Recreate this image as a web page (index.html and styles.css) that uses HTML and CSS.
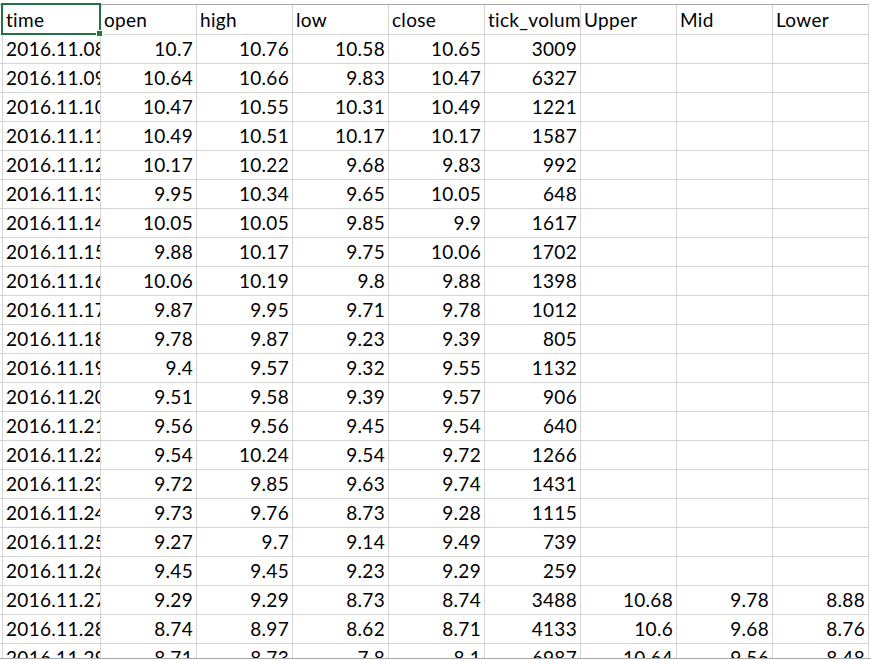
FILE: index.html
```html
<!DOCTYPE html>
<html>
<head>
<meta charset="utf-8">
<title>Sheet</title>
<link rel="stylesheet" href="styles.css">
</head>
<body>
<div class="viewport">
  <div class="grid">
    <div class="e"></div><div class="c">time</div><div class="c">open</div><div class="c">high</div><div class="c">low</div><div class="c">close</div><div class="c">tick_volume</div><div class="c">Upper</div><div class="c">Mid</div><div class="c">Lower</div>
    <div class="e"></div><div class="c">2016.11.08</div><div class="c n">10.7</div><div class="c n">10.76</div><div class="c n">10.58</div><div class="c n">10.65</div><div class="c n">3009</div><div class="c"></div><div class="c"></div><div class="c"></div>
    <div class="e"></div><div class="c">2016.11.09</div><div class="c n">10.64</div><div class="c n">10.66</div><div class="c n">9.83</div><div class="c n">10.47</div><div class="c n">6327</div><div class="c"></div><div class="c"></div><div class="c"></div>
    <div class="e"></div><div class="c">2016.11.10</div><div class="c n">10.47</div><div class="c n">10.55</div><div class="c n">10.31</div><div class="c n">10.49</div><div class="c n">1221</div><div class="c"></div><div class="c"></div><div class="c"></div>
    <div class="e"></div><div class="c">2016.11.11</div><div class="c n">10.49</div><div class="c n">10.51</div><div class="c n">10.17</div><div class="c n">10.17</div><div class="c n">1587</div><div class="c"></div><div class="c"></div><div class="c"></div>
    <div class="e"></div><div class="c">2016.11.12</div><div class="c n">10.17</div><div class="c n">10.22</div><div class="c n">9.68</div><div class="c n">9.83</div><div class="c n">992</div><div class="c"></div><div class="c"></div><div class="c"></div>
    <div class="e"></div><div class="c">2016.11.13</div><div class="c n">9.95</div><div class="c n">10.34</div><div class="c n">9.65</div><div class="c n">10.05</div><div class="c n">648</div><div class="c"></div><div class="c"></div><div class="c"></div>
    <div class="e"></div><div class="c">2016.11.14</div><div class="c n">10.05</div><div class="c n">10.05</div><div class="c n">9.85</div><div class="c n">9.9</div><div class="c n">1617</div><div class="c"></div><div class="c"></div><div class="c"></div>
    <div class="e"></div><div class="c">2016.11.15</div><div class="c n">9.88</div><div class="c n">10.17</div><div class="c n">9.75</div><div class="c n">10.06</div><div class="c n">1702</div><div class="c"></div><div class="c"></div><div class="c"></div>
    <div class="e"></div><div class="c">2016.11.16</div><div class="c n">10.06</div><div class="c n">10.19</div><div class="c n">9.8</div><div class="c n">9.88</div><div class="c n">1398</div><div class="c"></div><div class="c"></div><div class="c"></div>
    <div class="e"></div><div class="c">2016.11.17</div><div class="c n">9.87</div><div class="c n">9.95</div><div class="c n">9.71</div><div class="c n">9.78</div><div class="c n">1012</div><div class="c"></div><div class="c"></div><div class="c"></div>
    <div class="e"></div><div class="c">2016.11.18</div><div class="c n">9.78</div><div class="c n">9.87</div><div class="c n">9.23</div><div class="c n">9.39</div><div class="c n">805</div><div class="c"></div><div class="c"></div><div class="c"></div>
    <div class="e"></div><div class="c">2016.11.19</div><div class="c n">9.4</div><div class="c n">9.57</div><div class="c n">9.32</div><div class="c n">9.55</div><div class="c n">1132</div><div class="c"></div><div class="c"></div><div class="c"></div>
    <div class="e"></div><div class="c">2016.11.20</div><div class="c n">9.51</div><div class="c n">9.58</div><div class="c n">9.39</div><div class="c n">9.57</div><div class="c n">906</div><div class="c"></div><div class="c"></div><div class="c"></div>
    <div class="e"></div><div class="c">2016.11.21</div><div class="c n">9.56</div><div class="c n">9.56</div><div class="c n">9.45</div><div class="c n">9.54</div><div class="c n">640</div><div class="c"></div><div class="c"></div><div class="c"></div>
    <div class="e"></div><div class="c">2016.11.22</div><div class="c n">9.54</div><div class="c n">10.24</div><div class="c n">9.54</div><div class="c n">9.72</div><div class="c n">1266</div><div class="c"></div><div class="c"></div><div class="c"></div>
    <div class="e"></div><div class="c">2016.11.23</div><div class="c n">9.72</div><div class="c n">9.85</div><div class="c n">9.63</div><div class="c n">9.74</div><div class="c n">1431</div><div class="c"></div><div class="c"></div><div class="c"></div>
    <div class="e"></div><div class="c">2016.11.24</div><div class="c n">9.73</div><div class="c n">9.76</div><div class="c n">8.73</div><div class="c n">9.28</div><div class="c n">1115</div><div class="c"></div><div class="c"></div><div class="c"></div>
    <div class="e"></div><div class="c">2016.11.25</div><div class="c n">9.27</div><div class="c n">9.7</div><div class="c n">9.14</div><div class="c n">9.49</div><div class="c n">739</div><div class="c"></div><div class="c"></div><div class="c"></div>
    <div class="e"></div><div class="c">2016.11.26</div><div class="c n">9.45</div><div class="c n">9.45</div><div class="c n">9.23</div><div class="c n">9.29</div><div class="c n">259</div><div class="c"></div><div class="c"></div><div class="c"></div>
    <div class="e"></div><div class="c">2016.11.27</div><div class="c n">9.29</div><div class="c n">9.29</div><div class="c n">8.73</div><div class="c n">8.74</div><div class="c n">3488</div><div class="c n">10.68</div><div class="c n">9.78</div><div class="c n">8.88</div>
    <div class="e"></div><div class="c">2016.11.28</div><div class="c n">8.74</div><div class="c n">8.97</div><div class="c n">8.62</div><div class="c n">8.71</div><div class="c n">4133</div><div class="c n">10.6</div><div class="c n">9.68</div><div class="c n">8.76</div>
    <div class="e"></div><div class="c">2016.11.29</div><div class="c n">8.71</div><div class="c n">8.73</div><div class="c n">7.8</div><div class="c n">8.1</div><div class="c n">6987</div><div class="c n">10.64</div><div class="c n">9.56</div><div class="c n">8.48</div>
  </div>
  <div class="sel"></div>
  <div class="handle"></div>
</div>
</body>
</html>
```

FILE: styles.css
```css
html, body {
  margin: 0;
  padding: 0;
  background: #ffffff;
}

.viewport {
  position: relative;
  height: 659px;
  overflow: hidden;
  padding-top: 4px;
  box-sizing: border-box;
  border-bottom: 1px solid #a6a6a6;
}

.grid {
  display: grid;
  grid-template-columns: 2px 97px repeat(8, 95px);
  grid-template-rows: 29px;
  grid-auto-rows: 28px;
  gap: 1px;
  width: 869px;
  background: #d4d4d4;
  border-top: 1px solid #a6a6a6;
  border-right: 1px solid #d4d4d4;
  box-sizing: border-box;
  font-family: "Lato", "Liberation Sans", sans-serif;
  font-size: 19px;
  letter-spacing: 0.3px;
  color: #000000;
}

.e {
  background: #ffffff;
}

.c {
  background: #ffffff;
  padding: 0 3px;
  line-height: 28px;
  white-space: nowrap;
  overflow: hidden;
  text-align: left;
}

.grid > .c:nth-child(-n+10) {
  line-height: 30px;
}

.n {
  text-align: right;
}

.sel {
  position: absolute;
  left: 1px;
  top: 3px;
  width: 100px;
  height: 32px;
  border: 2px solid #217346;
  box-sizing: border-box;
}

.handle {
  position: absolute;
  left: 96px;
  top: 30px;
  width: 7px;
  height: 7px;
  background: #217346;
  border: 1px solid #ffffff;
  box-sizing: border-box;
}
```
